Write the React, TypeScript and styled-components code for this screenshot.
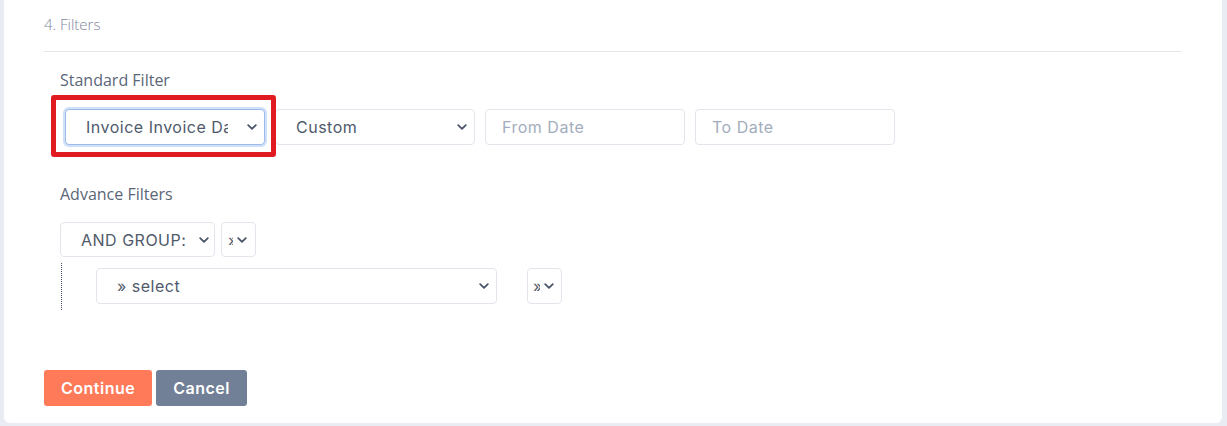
import React from 'react';
import styled, { createGlobalStyle } from 'styled-components';

const GlobalStyle = createGlobalStyle`
	html, body {
		margin: 0;
		padding: 0;
		background: #e9ecf3;
	}
	* {
		box-sizing: border-box;
	}
`;

const uiFont = `Inter, "Open Sans", "Liberation Sans", sans-serif`;
const labelFont = `"Open Sans", "Noto Sans", sans-serif`;

const Card = styled.div`
	margin: 0 5px 0 4px;
	background: #ffffff;
	border-radius: 0 0 6px 6px;
	padding: 14px 40px 17px;
	height: 423px;
`;

const SectionTitle = styled.div`
	font-family: ${labelFont};
	font-size: 15px;
	font-weight: 300;
	line-height: 20px;
	color: #7d879b;
	padding-bottom: 17px;
	border-bottom: 1px solid #e4e7ec;
`;

const Body = styled.div`
	padding-left: 16px;
`;

const Label = styled.div<{ $top: number }>`
	font-family: ${labelFont};
	font-size: 16px;
	line-height: 22px;
	color: #5b6678;
	margin-top: ${(p) => p.$top}px;
`;

const FilterRow = styled.div`
	position: relative;
	display: flex;
	gap: 10px;
	margin-top: 18px;
	padding-left: 5px;
`;

const Annotation = styled.div`
	position: absolute;
	left: -9px;
	top: -14px;
	width: 225px;
	height: 62px;
	border: 5px solid #e01b22;
	border-radius: 3px;
	pointer-events: none;
`;

const Field = styled.div<{ $width: number; $height?: number; $focus?: boolean }>`
	width: ${(p) => p.$width}px;
	height: ${(p) => p.$height ?? 36}px;
	flex: none;
	display: flex;
	align-items: center;
	border: 1px solid ${(p) => (p.$focus ? '#9dbbe8' : '#e2e6ec')};
	box-shadow: ${(p) => (p.$focus ? '0 0 0 2px #cfe0f8' : 'none')};
	border-radius: 4px;
	background: #fff;
	font-family: ${uiFont};
	font-size: 16px;
	letter-spacing: 0.5px;
	color: #4f5a6b;
	overflow: hidden;
`;

const FieldText = styled.span<{ $pad: number; $padRight?: number; $placeholder?: boolean }>`
	flex: 1;
	min-width: 0;
	padding-left: ${(p) => p.$pad}px;
	margin-right: ${(p) => p.$padRight ?? 0}px;
	white-space: nowrap;
	overflow: hidden;
	color: ${(p) => (p.$placeholder ? '#a3adbd' : 'inherit')};
`;

const Chevron = styled.svg<{ $right: number }>`
	flex: none;
	width: 10px;
	height: 6px;
	margin: 0 ${(p) => p.$right}px 0 4px;
`;

const GroupHead = styled.div`
	display: flex;
	gap: 6px;
	margin-top: 17px;
`;

const GroupBody = styled.div`
	margin: 6px 0 0 1px;
	border-left: 1px dotted #3f4c6b;
	padding: 5px 0 6px 34px;
	display: flex;
	gap: 30px;
`;

const Actions = styled.div`
	display: flex;
	gap: 4px;
	margin-top: 60px;
`;

const Button = styled.button<{ $tone: 'primary' | 'muted' }>`
	height: 36px;
	padding: 0 17px;
	border: none;
	border-radius: 3px;
	font-family: ${uiFont};
	font-size: 16px;
	font-weight: 600;
	letter-spacing: 0.5px;
	color: #fff;
	background: ${(p) => (p.$tone === 'primary' ? '#ff7a59' : '#718096')};
`;

const Down = ({ right = 10 }: { right?: number }) => (
	<Chevron $right={right} viewBox="0 0 10 6">
		<path d="M1.2 1.2 L5 4.8 L8.8 1.2" fill="none" stroke="#4a5568" strokeWidth="1.8" strokeLinecap="round" strokeLinejoin="round" />
	</Chevron>
);

const Select = ({
	width,
	height,
	text,
	pad = 20,
	padRight = 18,
	focus,
	right,
}: {
	width: number;
	height?: number;
	text: string;
	pad?: number;
	padRight?: number;
	focus?: boolean;
	right?: number;
}) => (
	<Field $width={width} $height={height} $focus={focus}>
		<FieldText $pad={pad} $padRight={padRight}>{text}</FieldText>
		<Down right={right} />
	</Field>
);

const Input = ({ placeholder }: { placeholder: string }) => (
	<Field $width={200}>
		<FieldText $pad={16} $placeholder>{placeholder}</FieldText>
	</Field>
);

export default function App() {
	return (
		<>
			<GlobalStyle />
			<Card>
				<SectionTitle>4. Filters</SectionTitle>
				<Body>
					<Label $top={17}>Standard Filter</Label>
					<FilterRow>
						<Select width={200} text="Invoice Invoice Date" focus right={7} padRight={15} />
						<Select width={200} text="Custom" right={7} />
						<Input placeholder="From Date" />
						<Input placeholder="To Date" />
						<Annotation />
					</FilterRow>

					<Label $top={38}>Advance Filters</Label>
					<GroupHead>
						<Select width={155} height={35} text="AND GROUP:" right={5} padRight={2} />
						<Select width={35} height={35} text="»" pad={6} padRight={0} right={8} />
					</GroupHead>
					<GroupBody>
						<Select width={401} text="» select" right={7} />
						<Select width={35} text="»" pad={5} padRight={0} right={7} />
					</GroupBody>
				</Body>
				<Actions>
					<Button $tone="primary">Continue</Button>
					<Button $tone="muted">Cancel</Button>
				</Actions>
			</Card>
		</>
	);
}
